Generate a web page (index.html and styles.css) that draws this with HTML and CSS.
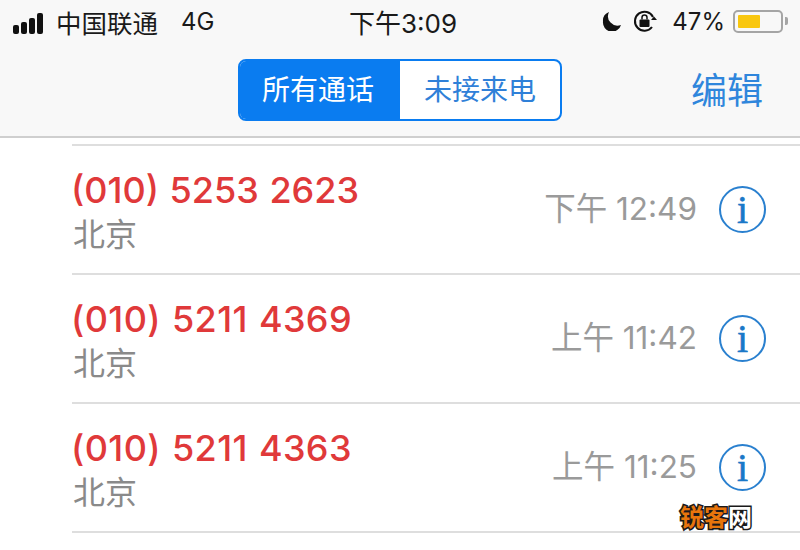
FILE: index.html
```html
<!DOCTYPE html>
<html lang="zh-CN">

<head>
    <meta charset="UTF-8">
    <meta name="viewport" content="width=device-width, initial-scale=1.0">
    <title>最近通话</title>
    <link rel="stylesheet" href="styles.css">
</head>

<body>
    <div class="header">
        <div class="status">
            <div class="status_left">
                <div class="signal"><i class="s1"></i><i class="s2"></i><i class="s3"></i><i class="s4"></i></div>
                <span class="carrier">中国联通</span>
                <span class="net">4G</span>
            </div>
            <div class="clock">下午3:09</div>
            <div class="status_right">
                <svg class="moon" width="20" height="20" viewBox="0 0 20 20">
                    <path d="M7 1 A9.5 9.5 0 0 0 19 14 A9.2 9.2 0 0 1 1 10.5 A9.4 9.4 0 0 1 7 1 Z" fill="#111" />
                </svg>
                <svg class="lock" width="26" height="24" viewBox="0 0 26 24">
                    <path d="M20 18 A9.5 9.5 0 1 1 21 8" fill="none" stroke="#111" stroke-width="2" />
                    <path d="M25 11 L19 11 L22 7.5 Z" fill="#111" />
                    <rect x="7.5" y="10.5" width="10" height="7.5" rx="1" fill="#111" />
                    <path d="M10 10.5 V8.5 a2.5 2.5 0 0 1 5 0 V10.5" fill="none" stroke="#111" stroke-width="1.5" />
                </svg>
                <span class="percent">47%</span>
                <div class="battery"><div class="level"></div></div>
                <div class="cap"></div>
            </div>
        </div>
        <div class="nav">
            <div class="tabs">
                <div class="tab active">所有通话</div>
                <div class="tab">未接来电</div>
            </div>
            <div class="edit">编辑</div>
        </div>
    </div>
    <div class="list">
        <div class="row">
            <div class="info">
                <div class="phone">(010) 5253 2623</div>
                <div class="city">北京</div>
            </div>
            <div class="time">下午 12:49</div>
            <div class="detail">i</div>
        </div>
        <div class="row">
            <div class="info">
                <div class="phone wide">(010) 5211 4369</div>
                <div class="city">北京</div>
            </div>
            <div class="time">上午 11:42</div>
            <div class="detail">i</div>
        </div>
        <div class="row">
            <div class="info">
                <div class="phone wide">(010) 5211 4363</div>
                <div class="city">北京</div>
            </div>
            <div class="time">上午 11:25</div>
            <div class="detail">i</div>
        </div>
        <div class="row_end"></div>
    </div>
    <div class="mark">锐客<span class="mark_end">网</span></div>
</body>

</html>
```

FILE: styles.css
```css
* {
    margin: 0;
    padding: 0;
    box-sizing: border-box;
}

body {
    width: 800px;
    height: 550px;
    overflow: hidden;
    position: relative;
    background: #fff;
    font-family: "Inter", "Noto Sans CJK SC", sans-serif;
}

.header {
    height: 138px;
    background: #f8f8f8;
    border-bottom: 2px solid #cfcfcf;
}

.status {
    height: 42px;
    padding: 0 12px 0 13px;
    display: flex;
    align-items: center;
    justify-content: space-between;
    color: #1a1a1a;
    font-size: 25.5px;
}

.status_left,
.status_right {
    width: 300px;
    display: flex;
    align-items: center;
}

.status_right {
    justify-content: flex-end;
}

.signal {
    display: flex;
    align-items: flex-end;
    gap: 2px;
    height: 22px;
    margin-top: 3px;
    margin-right: 13px;
}

.signal i {
    display: block;
    width: 6px;
    background: #111;
    border-radius: 2px;
}

.s1 { height: 9px; }
.s2 { height: 12px; }
.s3 { height: 16px; }
.s4 { height: 21px; }

.carrier {
    margin-right: 23px;
}

.net {
    font-size: 24px;
}

.clock {
    font-size: 26px;
    margin-left: 5px;
}

.moon {
    margin-right: 10px;
}

.lock {
    margin-right: 14px;
}

.percent {
    font-size: 24px;
    margin-right: 8px;
}

.battery {
    width: 50px;
    height: 23px;
    padding: 3px;
    border: 2px solid #a5a5a5;
    border-radius: 5px;
}

.level {
    width: 22px;
    height: 100%;
    background: #f9c70f;
    border-radius: 1px;
}

.cap {
    width: 3px;
    height: 8px;
    margin-left: 2px;
    background: #a5a5a5;
    border-radius: 0 2px 2px 0;
}

.nav {
    height: 94px;
    padding: 17px 37px 0 238px;
    display: flex;
    justify-content: space-between;
}

.tabs {
    width: 324px;
    height: 62px;
    display: flex;
    background: #fff;
    border: 2px solid #0a7cf0;
    border-radius: 8px;
    overflow: hidden;
}

.tab {
    flex: 1;
    color: #2f80d8;
    font-size: 28px;
    line-height: 58px;
    text-align: center;
}

.tab.active {
    flex: 0 0 160px;
    padding-right: 4px;
    color: #fff;
    background: #0a7cf0;
}

.edit {
    color: #2f86dc;
    font-size: 36px;
    line-height: 64px;
}

.list {
    padding-top: 6px;
    margin-left: 72px;
}

.row {
    height: 129px;
    padding-right: 34px;
    display: flex;
    align-items: center;
    border-top: 2px solid #dedede;
}

.row_end {
    border-top: 2px solid #dedede;
}

.info {
    flex: 1;
    padding-top: 6px;
}

.phone {
    color: #e0393a;
    font-size: 36px;
    font-weight: 500;
    word-spacing: 1px;
    line-height: 44px;
    margin-left: -1px;
}

.wide {
    letter-spacing: 0.4px;
}

.city {
    color: #8a8a8a;
    font-size: 32px;
    line-height: 46px;
    margin-left: 1px;
}

.time {
    color: #9a9a9a;
    font-size: 31.5px;
    line-height: 38px;
    margin-right: 22px;
    margin-bottom: 1px;
}

.detail {
    width: 47px;
    height: 47px;
    color: #1a78c8;
    font-family: "Liberation Serif", serif;
    font-size: 40px;
    line-height: 43px;
    text-align: center;
    -webkit-text-stroke: 0.6px #1a78c8;
    border: 2px solid #2a80cf;
    border-radius: 50%;
}

.mark {
    position: absolute;
    left: 680px;
    top: 503px;
    color: #e8750c;
    font-size: 24px;
    font-weight: 700;
    line-height: 30px;
    -webkit-text-stroke: 3px #1a1a1a;
    paint-order: stroke fill;
}

.mark_end {
    color: #fff;
}
```
